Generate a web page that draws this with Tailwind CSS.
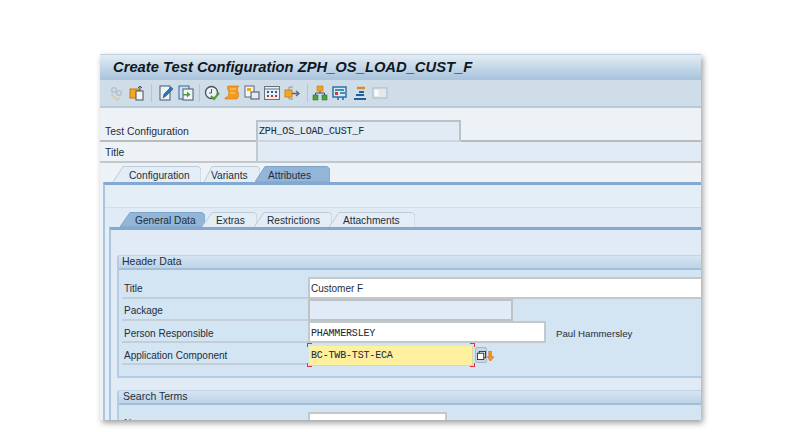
<!DOCTYPE html>
<html lang="en">
<head>
  <meta charset="UTF-8" />
  <title>Create Test Configuration</title>
  <script src="https://cdn.jsdelivr.net/npm/@tailwindcss/browser@4"></script>
</head>
<body class="bg-white h-[432px] overflow-hidden font-['Liberation_Sans',Arial,sans-serif] text-[10.2px] text-[#1f2d3a]">

  <div class="ml-[100px] mt-[54px] w-[601px] h-[366px] overflow-hidden bg-[#edf2f7] border-t border-[#c3d2e0] shadow-[2px_3px_6px_rgba(0,0,0,0.38)]">

    <!-- Title bar -->
    <div class="h-[25px] pl-[13px] flex items-center bg-gradient-to-b from-[#e3ecf4] to-[#a8c3dc] text-[14.750px] font-bold italic text-[#101820]">
      Create Test Configuration ZPH_OS_LOAD_CUST_F
    </div>

    <!-- Toolbar -->
    <div class="h-[28px] pl-[9px] flex items-center gap-1 bg-[#cfdde8] border-b-2 border-[#b9cbda]">
      <svg class="w-4 h-4" viewBox="0 0 16 16"><circle cx="5" cy="5" r="2.400" fill="none" stroke="#b5c2cc" stroke-width="1.400"/><circle cx="10" cy="8" r="2.400" fill="none" stroke="#b5c2cc" stroke-width="1.400"/><path d="M2 9l6 6 3-2" fill="none" stroke="#d9c8a8" stroke-width="1.600"/></svg>
      <svg class="w-4 h-4" viewBox="0 0 16 16"><rect x="1" y="4" width="9" height="9" fill="#f5a623" stroke="#c77a10"/><rect x="7" y="6" width="7" height="9" fill="#f4f6f8" stroke="#44505c"/><path d="M11 1v5M9 3l2-2 2 2" fill="none" stroke="#44505c"/></svg>
      <div class="w-px h-[18px] ml-[2px] bg-[#b3c6d6]"></div>
      <svg class="w-4 h-4 ml-[2px]" viewBox="0 0 16 16"><rect x="2" y="1" width="10" height="14" fill="#eef2f5" stroke="#4a5864"/><path d="M5 13l1-4 7-7 2 2-7 7z" fill="#2a76b8" stroke="#1d4f7d" stroke-width=".6"/></svg>
      <svg class="w-4 h-4" viewBox="0 0 16 16"><rect x="1" y="1" width="10" height="13" fill="#cfe2f2" stroke="#2f6a9c"/><rect x="5" y="4" width="10" height="11" fill="#f2f5f7" stroke="#4a5864"/><path d="M5 9h4V6.500l3.500 3-3.500 3V10.500H5z" fill="#46a03c"/></svg>
      <div class="w-px h-[18px] ml-[1px] bg-[#b3c6d6]"></div>
      <svg class="w-4 h-4" viewBox="0 0 16 16"><circle cx="7.500" cy="7.500" r="6" fill="#eef2f5" stroke="#46525e" stroke-width="1.300"/><path d="M7.500 4v4H5" fill="none" stroke="#46525e"/><path d="M7 11l3 3 5-6" fill="none" stroke="#4c9e35" stroke-width="2"/></svg>
      <svg class="w-4 h-4" viewBox="0 0 16 16"><path d="M4 1h11c-2 2-2 4-1 6s1 5-1 7H1c0-2 1-2 3-2 1-3 1-5 0-7-.6-1.500-.6-3 0-4z" fill="#f29a1f" stroke="#d9730f" stroke-width=".6"/><path d="M6 4h6M6 8h5" stroke="#fbd28a"/></svg>
      <svg class="w-4 h-4" viewBox="0 0 16 16"><rect x="1" y="1" width="9" height="11" fill="#f2f5f7" stroke="#5a6874"/><rect x="3" y="3" width="4" height="3" fill="#f5a623"/><rect x="7" y="7" width="8" height="7" fill="#e5ebf0" stroke="#46525e"/></svg>
      <svg class="w-4 h-4" viewBox="0 0 16 16"><rect x=".5" y="1.500" width="15" height="13" fill="#e9eef2" stroke="#68757f"/><path d="M1 4h14" stroke="#68757f"/><path d="M3 7h2M7 7h2M11 7h2" stroke="#1f5f9c" stroke-width="2"/><path d="M3 11h2M7 11h2M11 11h2" stroke="#c4331f" stroke-width="2"/></svg>
      <svg class="w-4 h-4" viewBox="0 0 16 16"><rect x="1" y="5" width="7" height="7" fill="#f5a623" stroke="#d9801a"/><path d="M8 8.500h7M12 6l3 2.500-3 2.500" fill="none" stroke="#5b6873" stroke-width="1.300"/><path d="M5 5V2h4M5 12v2h4" fill="none" stroke="#8794a0"/></svg>
      <div class="w-px h-[18px] ml-[3px] bg-[#b3c6d6]"></div>
      <svg class="w-4 h-4" viewBox="0 0 16 16"><rect x="5" y="1" width="6" height="5" fill="#f2a024" stroke="#bf7a14" stroke-width=".6"/><rect x="1" y="10" width="5" height="5" fill="#4ea23e" stroke="#33722a" stroke-width=".6"/><rect x="10" y="10" width="5" height="5" fill="#4ea23e" stroke="#33722a" stroke-width=".6"/><path d="M8 6v2M3.500 10V8h9v2" fill="none" stroke="#44505c"/></svg>
      <svg class="w-4 h-4" viewBox="0 0 16 16"><rect x="1" y="2" width="13" height="10" fill="#dbe8f2" stroke="#1f6d9e" stroke-width="1.400"/><path d="M3 5h9M8 8h5" stroke="#1f6d9e" stroke-width="1.400"/><rect x="3" y="7" width="3" height="3" fill="#d43c2a"/><path d="M6 12v3M11 12v3" stroke="#1f6d9e" stroke-width="1.500"/></svg>
      <svg class="w-4 h-4" viewBox="0 0 16 16"><path d="M5 3h8" stroke="#e2862a" stroke-width="2.500"/><path d="M7 7h5" stroke="#1f5f9c" stroke-width="2"/><path d="M4 10h8" stroke="#1f5f9c" stroke-width="2"/><path d="M2 14h12" stroke="#1f5f9c" stroke-width="2"/></svg>
      <svg class="w-4 h-4" viewBox="0 0 16 16"><rect x="1" y="3" width="14" height="10" fill="#e2e8ec" stroke="#aeb9c2"/><rect x="2.500" y="5" width="4" height="6" fill="#f8fafb"/></svg>
    </div>

    <!-- Header fields -->
    <div class="h-[34px] pl-[5px] pt-[12px] flex border-b-2 border-[#b8bcbf]">
      <div class="w-[151px] leading-[24px] text-[10.400px]">Test Configuration</div>
      <div class="w-[205px] h-[22px] pl-px border-2 border-[#bcc3c8] border-b-[#cfd6da] bg-[#e0ebf5] font-['Liberation_Mono',monospace] text-[10px] tracking-[-0.17px] leading-[19px] [-webkit-text-stroke:0.08px]">ZPH_OS_LOAD_CUST_F</div>
    </div>
    <div class="h-[21px] pl-[5px] flex bg-[#edf2f7] border-b-2 border-[#c3c7ca]">
      <div class="w-[151px] leading-[22px] text-[10.400px]">Title</div>
      <div class="flex-1 bg-[#e0ebf5] border-l-2 border-[#c3c9ce]"></div>
    </div>

    <!-- Outer tabs -->
    <div class="h-[19px] flex pt-[3px] ml-[13px]">
      <div class="relative w-[88px] h-[16px] pl-[16px] leading-[19px]">
        <svg class="absolute inset-0" width="88" height="16"><path d="M0 16L10 .5H85.500L88 3V16" fill="#e4edf5" stroke="#bccbd9"/></svg>
        <span class="relative">Configuration</span>
      </div>
      <div class="relative w-[59px] h-[16px] pl-[10px] leading-[19px]">
        <svg class="absolute inset-0" width="59" height="16"><path d="M3 16L11 .5H56.500L59 3V16" fill="#e4edf5" stroke="#bccbd9"/></svg>
        <span class="relative">Variants</span>
      </div>
      <div class="relative w-[75px] h-[16px] ml-[-5px] pl-[13px] leading-[19px]">
        <svg class="absolute inset-0" width="75" height="16"><path d="M0 16L10 .5H72L75 3V16z" fill="#92b5d8" stroke="#7da3c9"/></svg>
        <span class="relative">Attributes</span>
      </div>
    </div>

    <!-- Outer tab panel -->
    <div class="ml-[3px] border-t-[3px] border-l-2 border-[#a9c4de] border-t-[#83a9d0] bg-[#e4eef6]">
      <div class="h-[23px] border-b border-[#d0deea]"></div>
      <div class="h-[19px] flex bg-[#e0ebf5] pl-[15px]">
        <div class="relative w-[85px] h-[15px] mt-[4px] pl-[15px] leading-[17px]">
          <svg class="absolute inset-0" width="85" height="15"><path d="M0 15L10 .5H82L85 3V15z" fill="#92b5d8" stroke="#7da3c9"/></svg>
          <span class="relative">General Data</span>
        </div>
        <div class="relative w-[55px] h-[15px] mt-[4px] ml-[-3px] pl-[14px] leading-[17px]">
          <svg class="absolute inset-0" width="55" height="15"><path d="M0 15L10 .5H52.500L55 3V15" fill="#e4edf5" stroke="#bccbd9"/></svg>
          <span class="relative">Extras</span>
        </div>
        <div class="relative w-[78px] h-[15px] mt-[4px] ml-[-3px] pl-[13px] leading-[17px]">
          <svg class="absolute inset-0" width="78" height="15"><path d="M0 15L10 .5H75.500L78 3V15" fill="#e4edf5" stroke="#bccbd9"/></svg>
          <span class="relative">Restrictions</span>
        </div>
        <div class="relative w-[86px] h-[15px] mt-[4px] ml-[-3px] pl-[14px] leading-[17px]">
          <svg class="absolute inset-0" width="86" height="15"><path d="M0 15L10 .5H83.500L86 3V15" fill="#e4edf5" stroke="#bccbd9"/></svg>
          <span class="relative">Attachments</span>
        </div>
      </div>

      <!-- Inner tab panel -->
      <div class="ml-[4px] h-[200px] pl-[6px] pt-[25px] bg-[#e0ebf5] border-l-2 border-t-[3px] border-[#a9c4de] border-t-[#83a9d0]">

        <!-- Header Data group -->
        <div class="h-[123px] border-2 border-t-0 border-r-0 border-[#b4cde4] bg-[#d3e4f3] rounded-tl-[3px]">
          <div class="h-[15px] pl-[3px] leading-[11px] text-[10.500px] bg-gradient-to-b from-[#d6e5f2] to-[#bcd3e8] border-t border-b-2 border-t-[#c3d5e5] border-b-[#a3bed6]">Header Data</div>
          <div class="pt-[7px] text-[10px]">
            <div class="h-[22px] flex">
              <div class="w-[186px] ml-[3px] pl-[2px] border-b-2 border-[#c3ced8] leading-[23px]">Title</div>
              <div class="flex-1 pl-px bg-white border-2 border-[#c2c8cc] border-r-0 leading-[20px]">Customer F</div>
            </div>
            <div class="h-[22px] flex">
              <div class="w-[186px] ml-[3px] pl-[2px] border-b-2 border-[#c3ced8] leading-[23px]">Package</div>
              <div class="w-[205px] bg-[#e0ebf5] border-2 border-[#bcc3c8]"></div>
            </div>
            <div class="h-[22px] flex">
              <div class="w-[186px] ml-[3px] pl-[2px] border-b-2 border-[#c3ced8] leading-[25px]">Person Responsible</div>
              <div class="w-[238px] pl-px bg-white border-2 border-[#c2c8cc] font-['Liberation_Mono',monospace] text-[10px] tracking-[-0.17px] [-webkit-text-stroke:0.08px] leading-[22px]">PHAMMERSLEY</div>
              <div class="ml-[10px] leading-[26px] text-[9.700px]">Paul Hammersley</div>
            </div>
            <div class="h-[22px] flex">
              <div class="w-[186px] ml-[3px] pl-[2px] border-b-2 border-[#c3ced8] leading-[25px]">Application Component</div>
              <div class="relative w-[164px] h-[20px] ml-px mt-[3px] pl-[2px] bg-[#fff0a0] border-r border-b border-[#dcd8a8] font-['Liberation_Mono',monospace] text-[10px] tracking-[-0.17px] [-webkit-text-stroke:0.08px] leading-[20px]">
                BC-TWB-TST-ECA
                <div class="absolute left-[-2px] top-[-3px] w-[5px] h-[4px] border-l border-t border-[#e0304a]"></div>
                <div class="absolute left-[-2px] bottom-[-2px] w-[5px] h-[4px] border-l border-b border-[#e0304a]"></div>
                <div class="absolute right-[-3px] top-[-3px] w-[5px] h-[4px] border-r border-t border-[#e0304a]"></div>
                <div class="absolute right-[-3px] bottom-[-2px] w-[5px] h-[4px] border-r border-b border-[#e0304a]"></div>
              </div>
              <div class="w-[12px] h-[16px] ml-[2px] mt-[4px] flex items-center justify-center bg-[#c9d6e2] border border-[#aab8c4] rounded-[2px]">
                <svg class="w-[9px] h-[9px]" viewBox="0 0 10 10"><rect x="2.500" y=".5" width="7" height="7" fill="#dfe4e8" stroke="#2c343b"/><rect x=".5" y="2.500" width="7" height="7" fill="#fff" stroke="#2c343b"/></svg>
              </div>
              <svg class="w-[7px] h-[10px] mt-[8px]" viewBox="0 0 8 12"><path d="M2 0h3v7h3l-4 5-4-5h2z" fill="#f0a010" stroke="#d0501a" stroke-width=".7"/></svg>
            </div>
          </div>
        </div>

        <!-- Search Terms group -->
        <div class="mt-[12px] h-[60px] border-2 border-t-0 border-r-0 border-[#b4cde4] bg-[#d3e4f3] rounded-tl-[3px]">
          <div class="h-[15px] pl-[4px] leading-[11px] text-[10.500px] bg-gradient-to-b from-[#d6e5f2] to-[#bcd3e8] border-t border-b-2 border-t-[#c3d5e5] border-b-[#a3bed6]">Search Terms</div>
          <div class="flex pt-[7px] text-[10px]">
            <div class="w-[186px] ml-[3px] pl-[2px] leading-[24px]">Name</div>
            <div class="w-[139px] h-[22px] bg-white border-2 border-[#c2c8cc]"></div>
          </div>
        </div>
      </div>
    </div>
  </div>
</body>
</html>
